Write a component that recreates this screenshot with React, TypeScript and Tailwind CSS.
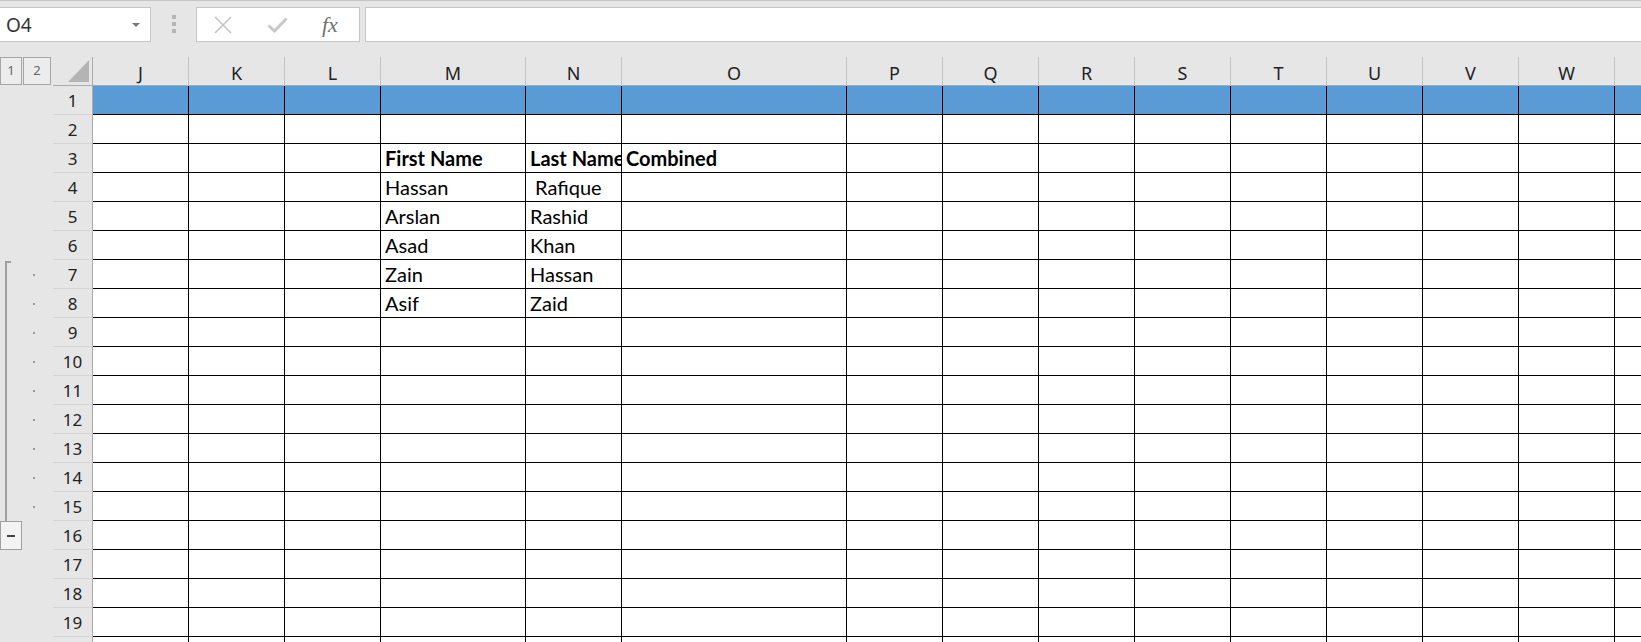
const columns = [
  { name: 'J', w: 'w-[96px]' },
  { name: 'K', w: 'w-[96px]' },
  { name: 'L', w: 'w-[96px]' },
  { name: 'M', w: 'w-[145px]' },
  { name: 'N', w: 'w-[96px]' },
  { name: 'O', w: 'w-[225px]' },
  { name: 'P', w: 'w-[96px]' },
  { name: 'Q', w: 'w-[96px]' },
  { name: 'R', w: 'w-[96px]' },
  { name: 'S', w: 'w-[96px]' },
  { name: 'T', w: 'w-[96px]' },
  { name: 'U', w: 'w-[96px]' },
  { name: 'V', w: 'w-[96px]' },
  { name: 'W', w: 'w-[96px]' },
  // X only peeks in at the right edge, its letter is off screen
  { name: '', w: 'w-[96px]' },
]

// values keyed by row number, then column letter
const data: Record<number, Record<string, string>> = {
  3: { M: 'First Name', N: 'Last Name', O: 'Combined' },
  4: { M: 'Hassan', N: ' Rafique' },
  5: { M: 'Arslan', N: 'Rashid' },
  6: { M: 'Asad', N: 'Khan' },
  7: { M: 'Zain', N: 'Hassan' },
  8: { M: 'Asif', N: 'Zaid' },
}

const rows = Array.from({ length: 20 }, (_, i) => i + 1)

function GutterCell({ row }: { row: number }) {
  if (row === 7) {
    return (
      <div className="flex h-[29px] items-center">
        <div className="ml-[5px] w-[6px] self-stretch mt-[1px] border-l-2 border-t-2 border-[#a0a0a0]" />
        <div className="ml-[22px] w-[2px] h-[2px] bg-[#9a9a9a]" />
      </div>
    )
  }
  if (row > 7 && row < 16) {
    return (
      <div className="flex h-[29px] items-center">
        <div className="ml-[5px] w-[6px] self-stretch border-l-2 border-[#a0a0a0]" />
        <div className="ml-[22px] w-[2px] h-[2px] bg-[#9a9a9a]" />
      </div>
    )
  }
  if (row === 16) {
    return (
      <div className="flex h-[29px]">
        <div className="w-[22px] h-[29px] border border-[#a0a0a0] bg-[#f3f3f3] flex items-center justify-center">
          <div className="w-[8px] h-[2px] bg-[#444]" />
        </div>
      </div>
    )
  }
  return <div className="h-[29px]" />
}

export default function App() {
  return (
    <div className="w-[1641px] h-[642px] overflow-hidden bg-[#e6e6e6] font-['Noto_Sans',sans-serif]">
      {/* Formula bar */}
      <div className="h-[57px] border-t border-[#c6c6c6] pt-[6px] flex items-start">
        <div className="w-[151px] h-[35px] bg-white border-y border-r border-[#c6c6c6] flex items-center justify-between pl-[6px] pr-[10px]">
          <span className="text-[19px] leading-[24px] text-[#333]">O4</span>
          <div className="w-0 h-0 border-l-[4px] border-r-[4px] border-t-[4px] border-l-transparent border-r-transparent border-t-[#777]" />
        </div>
        <div className="w-[45px] h-[35px] flex flex-col items-center pt-[8px] gap-[3px]">
          <div className="w-[4px] h-[4px] bg-[#b4b4b4]" />
          <div className="w-[4px] h-[4px] bg-[#b4b4b4]" />
          <div className="w-[4px] h-[4px] bg-[#b4b4b4]" />
        </div>
        <div className="w-[164px] h-[35px] bg-white border border-[#c6c6c6] flex items-center">
          <svg className="ml-[17px]" width="18" height="18" viewBox="0 0 18 18">
            <path d="M1 1 L17 17 M17 1 L1 17" stroke="#c4c4c4" strokeWidth="1.6" fill="none" />
          </svg>
          <svg className="ml-[35px]" width="21" height="16" viewBox="0 0 21 16">
            <path d="M1.5 8.5 L7.5 14 L19.5 1.5" stroke="#c8c8c8" strokeWidth="3" fill="none" />
          </svg>
          <span className="ml-[34px] font-['Liberation_Serif',serif] italic text-[22px] leading-[24px] text-[#707070]">
            fx
          </span>
        </div>
        <div className="ml-[5px] flex-1 h-[35px] bg-white border-y border-l border-[#c6c6c6]" />
      </div>

      <div className="flex">
        {/* Outline gutter */}
        <div className="w-[53px] shrink-0">
          <div className="h-[29px] flex gap-[1px]">
            <div className="w-[22px] h-[28px] border border-[#a6a6a6] bg-[#ececec] flex items-center justify-center text-[13px] text-[#666]">
              1
            </div>
            <div className="w-[28px] h-[28px] border border-[#a6a6a6] bg-[#ececec] flex items-center justify-center text-[13px] text-[#666]">
              2
            </div>
          </div>
          {rows.map((r) => (
            <GutterCell key={r} row={r} />
          ))}
        </div>

        {/* Sheet */}
        <div className="flex flex-col">
          {/* Column headers */}
          <div className="flex h-[29px]">
            <div className="w-[40px] shrink-0 h-[29px] border-r border-b border-[#ababab] flex items-end justify-end pb-[3px] pr-[3px]">
              <div className="w-0 h-0 border-b-[22px] border-l-[21px] border-b-[#b4b4b4] border-l-transparent" />
            </div>
            {columns.map((c, i) => (
              <div
                key={i}
                className={`${c.w} shrink-0 h-[29px] border-b border-b-[#ababab] border-r border-r-[#c4c4c4] flex items-end justify-center text-[18px] leading-[24px] text-[#222]`}
              >
                {c.name}
              </div>
            ))}
          </div>

          {/* Rows */}
          {rows.map((r) => (
            <div key={r} className="flex h-[29px]">
              <div className="w-[40px] shrink-0 h-[29px] border-r border-r-[#ababab] border-b border-b-[#d4d4d4] flex items-end justify-center pb-[1px] text-[17px] leading-[24px] text-[#222]">
                {r < 20 ? r : ''}
              </div>
              {columns.map((c, i) => {
                const value = data[r]?.[c.name]
                return (
                  <div
                    key={i}
                    className={`${c.w} shrink-0 h-[29px] border-r border-b border-black overflow-hidden whitespace-pre flex items-end pl-[4px] pb-[2px] font-['Lato',sans-serif] text-[20px] leading-[24px] text-black ${
                      r === 1 ? 'bg-[#5b9bd5]' : 'bg-white'
                    } ${r === 3 ? 'font-bold' : ''}`}
                  >
                    {value}
                  </div>
                )
              })}
            </div>
          ))}
        </div>
      </div>
    </div>
  )
}
